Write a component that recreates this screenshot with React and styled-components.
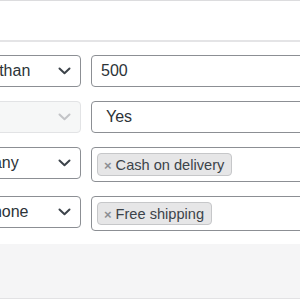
import React from "react";
import styled, { createGlobalStyle } from "styled-components";

const GlobalStyle = createGlobalStyle`
  html, body {
    margin: 0;
    padding: 0;
    background: #ffffff;
    overflow: hidden;
  }
  body {
    font-family: "Liberation Sans", Arial, sans-serif;
    color: #2c3338;
  }
`;

const Page = styled.div`
  width: 300px;
  height: 300px;
  overflow: hidden;
  display: flex;
  flex-direction: column;
`;

const TopStrip = styled.div`
  height: 39px;
  border-top: 1px solid #dcdcde;
  border-bottom: 2px solid #e4e4e6;
`;

const Rules = styled.div`
  display: grid;
  grid-template-columns: 162px 260px;
  column-gap: 10px;
  row-gap: 14px;
  align-items: start;
  margin-left: -81px;
  padding: 13px 0 13px;
`;

const SelectBox = styled.div`
  height: 32px;
  box-sizing: border-box;
  display: flex;
  align-items: center;
  justify-content: space-between;
  padding: 0 9px 0 8px;
  border: 1px solid ${({ $disabled }) => ($disabled ? "#e2e3e5" : "#8c8f94")};
  border-radius: 4px;
  background: ${({ $disabled }) => ($disabled ? "#f6f7f7" : "#ffffff")};
  font-size: 16px;
  color: #2c3338;
  white-space: nowrap;
  overflow: hidden;
`;

const Chevron = ({ disabled }) => (
  <svg width="13" height="8" viewBox="0 0 13 8" style={{ flexShrink: 0 }}>
    <polyline
      points="1.5,1.5 6.5,6.2 11.5,1.5"
      fill="none"
      stroke={disabled ? "#c3c4c7" : "#3c434a"}
      strokeWidth="2"
      strokeLinecap="round"
      strokeLinejoin="round"
    />
  </svg>
);

const ValueBox = styled.div`
  min-height: 32px;
  box-sizing: border-box;
  display: flex;
  align-items: center;
  flex-wrap: wrap;
  gap: 4px;
  padding: ${({ $pad }) => $pad || "0 9px"};
  border: 1px solid #8c8f94;
  border-radius: 4px;
  background: #ffffff;
  font-size: 16px;
  color: #2c3338;
`;

const Token = styled.span`
  display: inline-flex;
  align-items: center;
  gap: 4px;
  height: 23px;
  box-sizing: border-box;
  padding: 0 7px 0 6px;
  border: 1px solid #c6c7c9;
  border-radius: 4px;
  background: #e6e6e7;
  font-size: 14.6px;
  color: #3c434a;
  white-space: nowrap;
`;

const Remove = styled.span`
  font-size: 13px;
  font-weight: bold;
  color: #8c8f94;
  line-height: 1;
  margin-top: 1px;
`;

const Footer = styled.div`
  flex: 1;
  background: #f5f5f6;
  border-bottom: 1px solid #e2e2e4;
  margin-bottom: 1px;
`;

const rules = [
  { op: "is greater than", value: "500" },
  { op: "", disabled: true, value: "Yes", pad: "0 14px" },
  { op: "Matches any", tokens: ["Cash on delivery"] },
  { op: "Matches none", tokens: ["Free shipping"] },
];

export default function App() {
  return (
    <Page>
      <GlobalStyle />
      <TopStrip />
      <Rules>
        {rules.map((r, i) => (
          <React.Fragment key={i}>
            <SelectBox $disabled={r.disabled}>
              <span>{r.op}</span>
              <Chevron disabled={r.disabled} />
            </SelectBox>
            {r.tokens ? (
              <ValueBox $pad="5px 5px">
                {r.tokens.map((t) => (
                  <Token key={t}>
                    <Remove>×</Remove>
                    {t}
                  </Token>
                ))}
              </ValueBox>
            ) : (
              <ValueBox $pad={r.pad}>{r.value}</ValueBox>
            )}
          </React.Fragment>
        ))}
      </Rules>
      <Footer />
    </Page>
  );
}
